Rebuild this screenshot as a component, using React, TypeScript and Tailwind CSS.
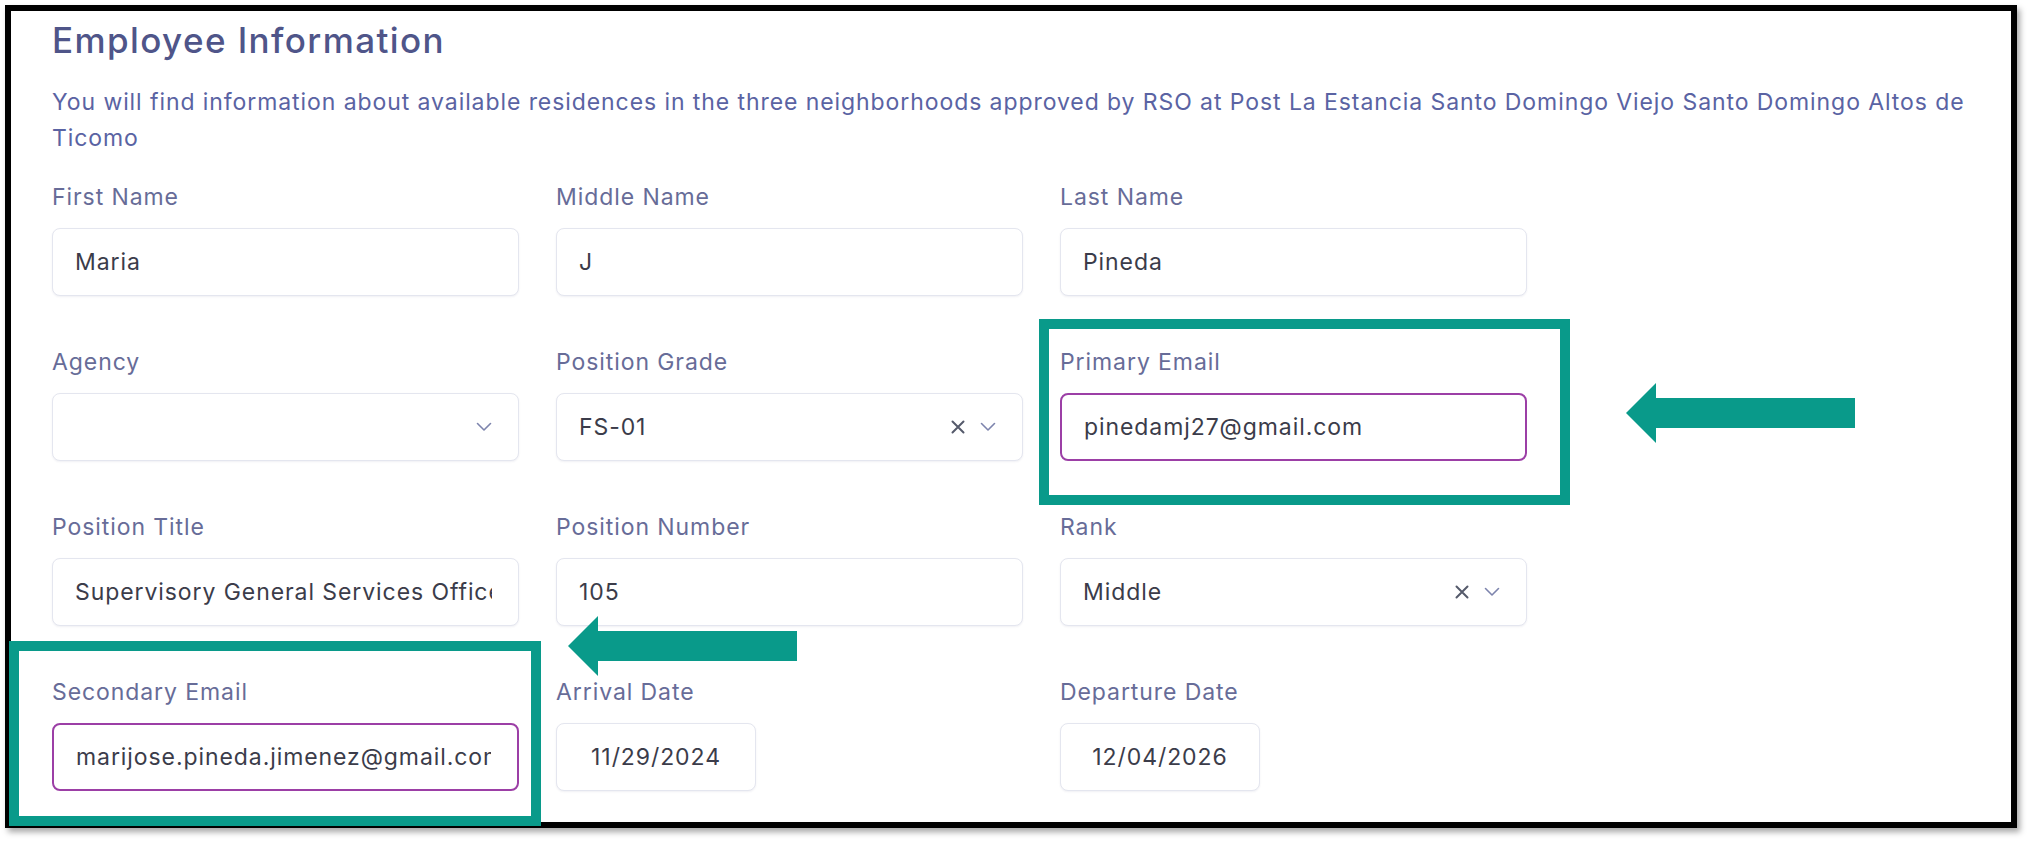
import React from "react";

const FONT = { fontFamily: "Inter, 'Noto Sans', sans-serif" };

function Chevron() {
  return (
    <svg width="16" height="10" viewBox="0 0 16 10" fill="none" className="shrink-0">
      <path d="M1.5 1.5 L8 8 L14.5 1.5" stroke="#7d84ad" strokeWidth="1.6" strokeLinecap="round" strokeLinejoin="round" />
    </svg>
  );
}

function Cross() {
  return (
    <svg width="14" height="14" viewBox="0 0 14 14" fill="none" className="shrink-0">
      <path d="M1.5 1.5 L12.5 12.5 M12.5 1.5 L1.5 12.5" stroke="#555a6b" strokeWidth="2" strokeLinecap="round" />
    </svg>
  );
}

type FieldProps = {
  label: string;
  value?: string;
  highlight?: boolean;
  select?: boolean;
  clearable?: boolean;
  date?: boolean;
};

function Field({ label, value = "", highlight = false, select = false, clearable = false, date = false }: FieldProps) {
  const border = highlight
    ? "border-2 border-[#9c3fa6]"
    : "border-[1.5px] border-[#e4e6ef] shadow-[0_1px_2px_rgba(60,64,110,0.08)]";
  return (
    <div className="flex flex-col">
      <label className="mb-[14px] text-[23px] leading-[33px] tracking-[0.04em] text-[#676c98]">{label}</label>
      <div className={`flex h-[68px] items-center rounded-[8px] bg-white ${border} ${date ? "w-[200px] justify-center" : "w-full pl-[22px] pr-[26px]"}`}>
        <input
          readOnly
          value={value}
          className={`min-w-0 flex-1 bg-transparent text-[23px] tracking-[0.04em] text-[#3b3c4a] outline-none ${date ? "text-center" : ""}`}
        />
        {select && (
          <div className="flex items-center gap-[15px]">
            {clearable && <Cross />}
            <Chevron />
          </div>
        )}
      </div>
    </div>
  );
}

function Arrow({ className }: { className: string }) {
  return (
    <svg width="229" height="60" viewBox="0 0 229 60" className={className}>
      <polygon points="0,30 30,0 30,15 229,15 229,45 30,45 30,60" fill="#099a8a" />
    </svg>
  );
}

export default function App() {
  return (
    <div className="relative h-[841px] w-[2030px] overflow-hidden bg-white" style={FONT}>
      <div className="ml-[5px] mt-[5px] h-[823px] w-[2012px] border-[6px] border-black bg-white pl-[41px] pr-[20px] pt-[9px] shadow-[3px_4px_6px_rgba(0,0,0,0.35)]">
        <h1 className="text-[35px] font-medium leading-[40px] tracking-[0.04em] text-[#4f5589]">Employee Information</h1>
        <p className="mt-[24px] text-[23px] leading-[36px] tracking-[0.04em] text-[#5a63a3]">
          You will find information about available residences in the three neighborhoods approved by RSO at Post La Estancia Santo Domingo Viejo Santo Domingo Altos de Ticomo
        </p>
        <div className="mt-[25px] grid grid-cols-[467px_467px_467px] gap-x-[37px] gap-y-[50px]">
          <Field label="First Name" value="Maria" />
          <Field label="Middle Name" value="J" />
          <Field label="Last Name" value="Pineda" />
          <Field label="Agency" select />
          <Field label="Position Grade" value="FS-01" select clearable />
          <Field label="Primary Email" value="pinedamj27@gmail.com" highlight />
          <Field label="Position Title" value="Supervisory General Services Officer" />
          <Field label="Position Number" value="105" />
          <Field label="Rank" value="Middle" select clearable />
          <Field label="Secondary Email" value="marijose.pineda.jimenez@gmail.com" highlight />
          <Field label="Arrival Date" value="11/29/2024" date />
          <Field label="Departure Date" value="12/04/2026" date />
        </div>
      </div>

      {/* callouts */}
      <div className="absolute left-[1039px] top-[319px] h-[186px] w-[531px] border-[10px] border-[#099a8a]" />
      <div className="absolute left-[9px] top-[641px] h-[185px] w-[532px] border-[10px] border-[#099a8a]" />
      <Arrow className="absolute left-[1626px] top-[383px]" />
      <Arrow className="absolute left-[568px] top-[616px]" />
    </div>
  );
}
